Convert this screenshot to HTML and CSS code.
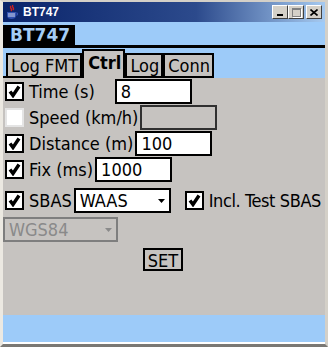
FILE: index.html
```html
<!DOCTYPE html>
<html>
<head>
    <title>BT747</title>
    <link rel="stylesheet" href="styles.css">
</head>
<body>
    <div class="window">
        <div class="titlebar">
            <svg class="app-icon" width="14" height="15" viewBox="0 0 14 15">
                <path d="M6 1c-2 2 2 3 0 5M8 0c-2 2 2 3 0 5" stroke="#d02020" stroke-width="1.4" fill="none"/>
                <path d="M2 7h9v4c0 2-2 3-4.5 3S2 13 2 11z" fill="#3050b0"/>
                <path d="M11 8h1.5v2H11" stroke="#3050b0" fill="none"/>
                <path d="M3 9h7M3 11h7" stroke="#ffffff" stroke-width="0.8"/>
            </svg>
            <span class="title-text">BT747</span>
            <div class="caption-buttons">
                <div class="cap-btn"><span class="glyph-min"></span></div>
                <div class="cap-btn disabled"><span class="glyph-max"></span></div>
                <div class="cap-btn close">
                    <svg width="8" height="7" viewBox="0 0 8 7">
                        <path d="M0.5 0.5l7 6M7.5 0.5l-7 6" stroke="#000" stroke-width="1.6"/>
                    </svg>
                </div>
            </div>
        </div>

        <div class="client">
            <div class="app-head">
                <div class="app-title">BT747</div>
            </div>

            <div class="tabs">
                <div class="tab">Log FMT</div>
                <div class="tab active">Ctrl</div>
                <div class="tab">Log</div>
                <div class="tab">Conn</div>
            </div>

            <div class="panel">
                <div class="row">
                    <span class="check checked"><svg width="13" height="13" viewBox="0 0 13 13"><path d="M2 6.5l3 4 6-9" stroke="#000" stroke-width="3.4" fill="none"/></svg></span>
                    <span class="label">Time (s)</span>
                    <input class="field field-wide-gap" value="8">
                </div>
                <div class="row">
                    <span class="check"></span>
                    <span class="label">Speed (km/h)</span>
                    <input class="field" disabled>
                </div>
                <div class="row">
                    <span class="check checked"><svg width="13" height="13" viewBox="0 0 13 13"><path d="M2 6.5l3 4 6-9" stroke="#000" stroke-width="3.4" fill="none"/></svg></span>
                    <span class="label">Distance (m)</span>
                    <input class="field" value="100">
                </div>
                <div class="row">
                    <span class="check checked"><svg width="13" height="13" viewBox="0 0 13 13"><path d="M2 6.5l3 4 6-9" stroke="#000" stroke-width="3.4" fill="none"/></svg></span>
                    <span class="label">Fix (ms)</span>
                    <input class="field" value="1000">
                </div>

                <div class="row row-sbas">
                    <span class="check checked"><svg width="13" height="13" viewBox="0 0 13 13"><path d="M2 6.5l3 4 6-9" stroke="#000" stroke-width="3.4" fill="none"/></svg></span>
                    <span class="label label-tight">SBAS</span>
                    <div class="select">
                        <span>WAAS</span>
                        <svg width="7" height="4" viewBox="0 0 7 4"><path d="M0 0h7L3.5 4z" fill="#000"/></svg>
                    </div>
                    <span class="check checked check-spaced"><svg width="13" height="13" viewBox="0 0 13 13"><path d="M2 6.5l3 4 6-9" stroke="#000" stroke-width="3.4" fill="none"/></svg></span>
                    <span class="label label-narrow">Incl. Test SBAS</span>
                </div>

                <div class="row row-datum">
                    <div class="select select-disabled">
                        <span>WGS84</span>
                        <svg width="7" height="4" viewBox="0 0 7 4"><path d="M0 0h7L3.5 4z" fill="#8a8a8a"/></svg>
                    </div>
                </div>

                <div class="row row-set">
                    <button class="set-btn">SET</button>
                </div>
            </div>

            <div class="statusbar"></div>
        </div>
    </div>
</body>
</html>
```

FILE: styles.css
```css
body {
    margin: 0;
    font-family: "DejaVu Sans Condensed", "Liberation Sans", sans-serif;
    background: #fff;
}
.window {
    width: 328px;
    height: 347px;
    box-sizing: border-box;
    border: 3px solid #d4d0c8;
    border-top-width: 2px;
    border-left-color: #ece9e2;
    border-bottom-color: #7a7874;
    display: flex;
    flex-direction: column;
    background: #d4d0c8;
}
.titlebar {
    height: 20px;
    display: flex;
    align-items: center;
    background: linear-gradient(to right, #0a246a, #2c4a8c 60%, #a6caf0);
    color: #fff;
}
.app-icon {
    margin-left: 2px;
    margin-right: 4px;
}
.title-text {
    font-family: "Liberation Sans", sans-serif;
    font-weight: bold;
    font-size: 12px;
}
.caption-buttons {
    margin-left: auto;
    margin-right: 3px;
    display: flex;
}
.cap-btn {
    width: 16px;
    height: 14px;
    box-sizing: border-box;
    background: #d4d0c8;
    border: 1px solid;
    border-color: #fff #404040 #404040 #fff;
    display: flex;
    align-items: center;
    justify-content: center;
}
.cap-btn.close {
    margin-left: 2px;
}
.glyph-min {
    width: 6px;
    height: 2px;
    background: #000;
    margin-top: 6px;
    margin-right: 1px;
}
.glyph-max {
    width: 7px;
    height: 6px;
    border: 1px solid #808080;
    border-top-width: 2px;
    box-shadow: 1px 1px 0 #fff;
}
.client {
    flex: 1;
    display: flex;
    flex-direction: column;
    background: #9dcbf9;
    border-bottom: 2px solid #fff;
}
.app-head {
    height: 26px;
    box-sizing: border-box;
    border-bottom: 3px solid #000;
    display: flex;
    align-items: flex-end;
}
.app-title {
    background: #000;
    color: #a4cdf6;
    font-family: "DejaVu Sans", sans-serif;
    font-weight: bold;
    font-size: 17px;
    line-height: 20px;
    padding: 0 5px 0 7px;
}
.tabs {
    height: 30px;
    display: flex;
    align-items: flex-end;
    padding-left: 3px;
    background: linear-gradient(#000, #000) left bottom / 210px 2px no-repeat;
    font-size: 18px;
}
.tab {
    height: 25px;
    box-sizing: border-box;
    border: 2px solid #000;
    background: #c6c3c0;
    padding: 0 2px 0 3px;
    line-height: 21px;
}
.tab.active {
    height: 29px;
    border-bottom: none;
    font-weight: bold;
    padding: 2px 2px 0 4px;
    line-height: 20px;
}
.panel {
    flex: 1;
    background: #c6c3c0;
    padding: 1px 0 0 2px;
    display: flex;
    flex-direction: column;
    gap: 1px;
    font-size: 18px;
}
.row {
    height: 25px;
    display: flex;
    align-items: center;
}
.label {
    white-space: nowrap;
    flex-shrink: 0;
}
.label-narrow {
    letter-spacing: -0.4px;
}
.check {
    width: 19px;
    height: 19px;
    flex-shrink: 0;
    box-sizing: border-box;
    border: 2px solid #000;
    background: #fff;
    margin-right: 5px;
    display: flex;
    align-items: center;
    justify-content: center;
}
.check:not(.checked) {
    border-color: #e4e4e4;
}
.check-spaced {
    margin-left: 14px;
}
.label-tight {
    margin-right: 2px;
}
.field {
    width: 77px;
    height: 25px;
    box-sizing: border-box;
    border: 2px solid #000;
    background: #fff;
    font: inherit;
    padding: 0 4px;
    margin: 0 0 0 2px;
    color: #000;
    outline: none;
}
.field:disabled {
    background: #c6c3c0;
    border-color: #303030;
}
.field-wide-gap {
    margin-left: 20px;
}
.select {
    width: 97px;
    height: 25px;
    flex-shrink: 0;
    box-sizing: border-box;
    border: 2px solid #000;
    background: #fff;
    display: flex;
    align-items: center;
    justify-content: space-between;
    padding: 0 4px 0 4px;
}
.select-disabled {
    width: 115px;
    border-color: #7e7e7e;
    background: #c6c3c0;
    color: #8a8a8a;
}
.row-sbas {
    margin-top: 5px;
}
.row-datum {
    margin-top: 3px;
    margin-left: -2px;
}
.row-set {
    margin-top: 5px;
    height: 23px;
    justify-content: center;
}
.set-btn {
    height: 23px;
    box-sizing: border-box;
    border: 2px solid #000;
    background: #c6c3c0;
    font: inherit;
    padding: 0 3px;
    color: #000;
    margin-left: -4px;
}
.statusbar {
    height: 27px;
    background: #9dcbf9;
}
```
